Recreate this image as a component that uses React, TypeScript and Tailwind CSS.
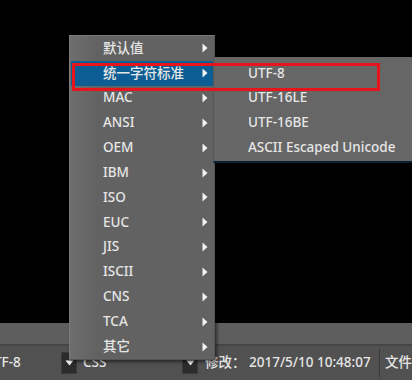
import React from "react";

const font = { fontFamily: "'Noto Sans', 'Noto Sans CJK SC', sans-serif" };

const mainItems = [
  "默认值",
  "统一字符标准",
  "MAC",
  "ANSI",
  "OEM",
  "IBM",
  "ISO",
  "EUC",
  "JIS",
  "ISCII",
  "CNS",
  "TCA",
  "其它",
];

const subItems = ["UTF-8", "UTF-16LE", "UTF-16BE", "ASCII Escaped Unicode"];

function RightTri() {
  return (
    <svg width="6" height="10" viewBox="0 0 6 10" className="block">
      <path d="M0.5 0.5 L5.5 5 L0.5 9.5 Z" fill="#f2f2f2" />
    </svg>
  );
}

function DropBtn() {
  return (
    <div className="w-[16px] h-[22px] bg-[#2c2c2c] border border-[#3a3a3a] flex items-center justify-center">
      <svg width="9" height="6" viewBox="0 0 9 6" className="block">
        <path d="M0.5 0.5 L8.5 0.5 L4.5 5.5 Z" fill="#f0f0f0" />
      </svg>
    </div>
  );
}

export default function App() {
  return (
    <div
      className="relative w-[412px] h-[380px] overflow-hidden bg-black flex flex-col text-[#e6e6e6] font-medium"
      style={font}
    >
      <div className="flex-1 bg-black" />
      <div className="h-[21px] bg-[#5e5e5e]" />
      <div className="h-[2px] bg-[#454545]" />
      <div className="h-[34px] bg-[#515151] flex items-center text-[13.5px] leading-none">
        <div className="w-[61px] h-full flex items-center overflow-hidden">
          <span className="ml-[-16px] whitespace-nowrap">UTF-8</span>
        </div>
        <DropBtn />
        <div className="w-[105px] pl-[6px] whitespace-nowrap">CSS</div>
        <DropBtn />
        <div className="w-[181px] pl-[7px] whitespace-nowrap">修改： 2017/5/10 10:48:07</div>
        <div className="w-[1px] h-[28px] bg-[#3a3a3a]" />
        <div className="pl-[5px] whitespace-nowrap">文件</div>
      </div>

      {/* main menu */}
      <div className="absolute left-[69px] top-[35px] w-[146px] h-[325px] bg-[#626262] border border-[#7a7a7a] border-r-[#555] border-b-[#555] shadow-[2px_2px_3px_rgba(0,0,0,0.5)] flex flex-col">
        <div className="absolute left-0 top-0 bottom-0 w-[26px] bg-gradient-to-r from-[#6e6e6e] to-[#636363]" />
        {mainItems.map((t, i) => (
          <div
            key={t}
            className={
              "relative h-[24.85px] mx-[1px] flex items-center text-[13.5px] leading-none " +
              (i === 1 ? "bg-[#0c5d93]" : "")
            }
          >
            <span className="ml-[32px] flex-1 whitespace-nowrap">{t}</span>
            <span className="mr-[5px]">
              <RightTri />
            </span>
          </div>
        ))}
      </div>

      {/* submenu */}
      <div className="absolute left-[213px] top-[57px] w-[210px] h-[106px] bg-[#666666] border-l border-[#575757] border-b-[2px] border-b-[#0b2133] flex flex-col pt-[4px]">
        {subItems.map((t) => (
          <div key={t} className="h-[24.75px] flex items-center text-[13.5px] leading-none">
            <span className="ml-[34px] whitespace-nowrap">{t}</span>
          </div>
        ))}
      </div>

      {/* red annotation box */}
      <div className="absolute left-[72px] top-[63px] w-[308px] h-[28px] border-[3px] border-[#e8141c]" />
    </div>
  );
}
